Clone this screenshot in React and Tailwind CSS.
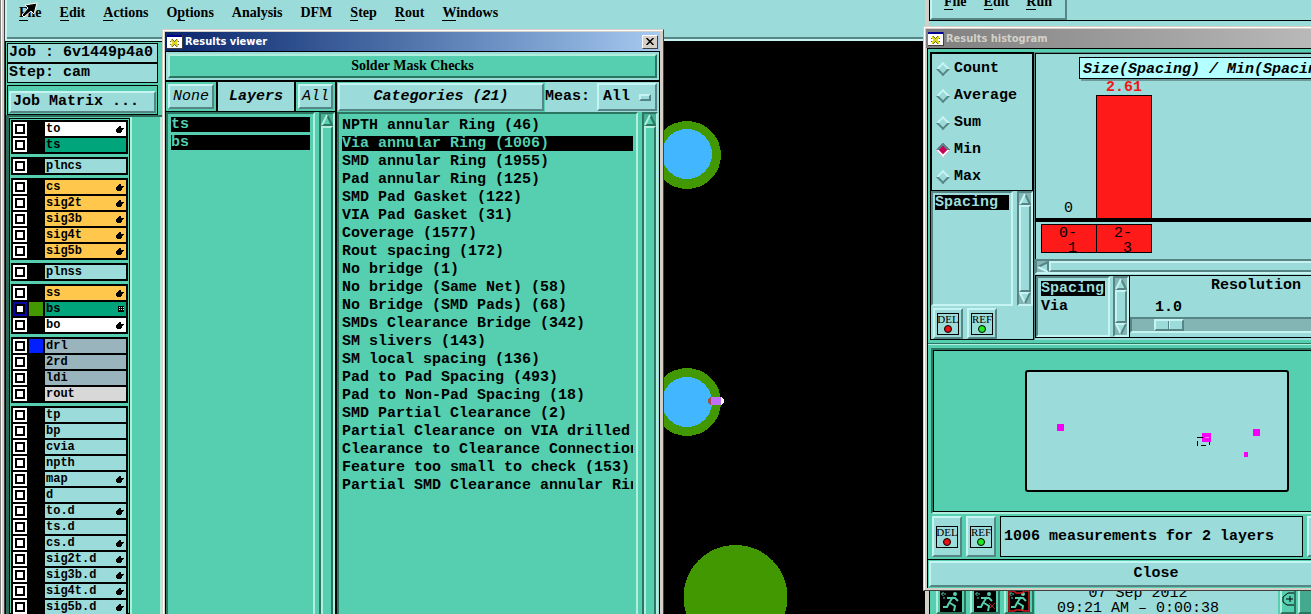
import React, { useState } from 'react';
import clsx from 'clsx';

const MONO = "font-['Liberation_Mono',monospace] text-[15px] leading-[18px]";
const SERIF = "font-['Liberation_Serif',serif] text-[14px] leading-[18px] font-bold";

// Motif bevels: light panels and green panels, raised and sunken
const RAISED = 'border-2 border-t-[#c6f4f2] border-l-[#c6f4f2] border-b-[#578585] border-r-[#578585]';
const SUNKEN = 'border-2 border-t-[#578585] border-l-[#578585] border-b-[#c6f4f2] border-r-[#c6f4f2]';
const RAISED_GREEN = 'border-2 border-t-[#b0eedd] border-l-[#b0eedd] border-b-[#2c7560] border-r-[#2c7560]';
const SUNKEN_GREEN = 'border-2 border-t-[#2c7560] border-l-[#2c7560] border-b-[#b0eedd] border-r-[#b0eedd]';

const layerGroups = [
  [
    { name: 'to', color: 'bg-white', hand: true },
    { name: 'ts', color: 'bg-[#00a57c]' },
  ],
  [{ name: 'plncs', color: 'bg-[#9bdbda]' }],
  [
    { name: 'cs', color: 'bg-[#ffc84c]', hand: true },
    { name: 'sig2t', color: 'bg-[#ffc84c]', hand: true },
    { name: 'sig3b', color: 'bg-[#ffc84c]', hand: true },
    { name: 'sig4t', color: 'bg-[#ffc84c]', hand: true },
    { name: 'sig5b', color: 'bg-[#ffc84c]', hand: true },
  ],
  [{ name: 'plnss', color: 'bg-[#9bdbda]' }],
  [
    { name: 'ss', color: 'bg-[#ffc84c]', hand: true },
    { name: 'bs', color: 'bg-[#00a57c]', swatch: 'bg-[#429800]', active: true, grid: true },
    { name: 'bo', color: 'bg-white', hand: true },
  ],
  [
    { name: 'drl', color: 'bg-[#9ab4bd]', swatch: 'bg-[#0020ff]' },
    { name: '2rd', color: 'bg-[#9ab4bd]' },
    { name: 'ldi', color: 'bg-[#9ab4bd]' },
    { name: 'rout', color: 'bg-[#d8d8d8]' },
  ],
  [
    { name: 'tp', color: 'bg-[#9bdbda]' },
    { name: 'bp', color: 'bg-[#9bdbda]' },
    { name: 'cvia', color: 'bg-[#9bdbda]' },
    { name: 'npth', color: 'bg-[#9bdbda]' },
    { name: 'map', color: 'bg-[#9bdbda]', hand: true },
    { name: 'd', color: 'bg-[#9bdbda]' },
    { name: 'to.d', color: 'bg-[#9bdbda]', hand: true },
    { name: 'ts.d', color: 'bg-[#9bdbda]' },
    { name: 'cs.d', color: 'bg-[#9bdbda]', hand: true },
    { name: 'sig2t.d', color: 'bg-[#9bdbda]', hand: true },
    { name: 'sig3b.d', color: 'bg-[#9bdbda]', hand: true },
    { name: 'sig4t.d', color: 'bg-[#9bdbda]', hand: true },
    { name: 'sig5b.d', color: 'bg-[#9bdbda]', hand: true },
  ],
];

const categories = [
  'NPTH annular Ring (46)',
  'Via annular Ring (1006)',
  'SMD annular Ring (1955)',
  'Pad annular Ring (125)',
  'SMD Pad Gasket (122)',
  'VIA Pad Gasket (31)',
  'Coverage (1577)',
  'Rout spacing (172)',
  'No bridge (1)',
  'No bridge (Same Net) (58)',
  'No Bridge (SMD Pads) (68)',
  'SMDs Clearance Bridge (342)',
  'SM slivers (143)',
  'SM local spacing (136)',
  'Pad to Pad Spacing (493)',
  'Pad to Non-Pad Spacing (18)',
  'SMD Partial Clearance (2)',
  'Partial Clearance on VIA drilled',
  'Clearance to Clearance Connection',
  'Feature too small to check (153)',
  'Partial SMD Clearance annular Ring',
];

const MenuItem = ({ label, index = 0, plain }) => (
  <button type="button" className={SERIF}>
    {plain ? label : (
      <>
        {label.slice(0, index)}
        <span className="border-b border-black">{label[index]}</span>
        {label.slice(index + 1)}
      </>
    )}
  </button>
);

const HandIcon = () => (
  <svg viewBox="0 0 8 8" className="w-2 h-2" shapeRendering="crispEdges">
    <path d="M3 1h2v2h3v1H7v1H6v2H5v1H1V7H0V4h1V3h1V2h1z" />
  </svg>
);

const GridIcon = () => (
  <svg viewBox="0 0 6 6" className="w-[6px] h-[6px]" shapeRendering="crispEdges">
    <path d="M0 0h6v6H0z" />
    <path d="M1 1h1v1H1zM3 1h1v1H3zM1 3h1v1H1zM3 3h1v1H3zM5 1h1v1H5zM5 3h1v1H5z" fill="#c8f0e4" />
  </svg>
);

const WindowIcon = () => (
  <svg viewBox="0 0 16 14" className="w-4 h-[14px]" shapeRendering="crispEdges">
    <path d="M0 0h16v14H0z" fill="#404040" />
    <path d="M0 0h15v13H0z" fill="#fff" />
    <path d="M0 0h15v2H0z" fill="#000090" />
    <path d="M4 5l7 6M11 5l-7 6" stroke="#6b6b20" strokeWidth="3" />
    <path d="M4 5l7 6M11 5l-7 6" stroke="#e0d820" strokeWidth="2" />
  </svg>
);

const Arrow = ({ dir = 'up', green }) => {
  const light = green ? '#b0eedd' : '#c6f4f2';
  const dark = green ? '#2c7560' : '#578585';
  const turn = { up: '', down: 'rotate-180', left: '-rotate-90' }[dir];
  return (
    <svg viewBox="0 0 12 12" className={clsx('w-3 h-3 shrink-0', turn)}>
      <path d="M6 1L11 11H1z" fill={green ? '#55cfaf' : '#9bdbda'} />
      <path d="M6 1L11 11H1" stroke={dir === 'down' ? light : dark} strokeWidth="2" fill="none" />
      <path d="M6 1L1 11" stroke={dir === 'down' ? dark : light} strokeWidth="2" />
    </svg>
  );
};

const ScrollBar = ({ green, bothEnds }) => (
  <div className={clsx('flex flex-col items-center w-4 shrink-0', green ? SUNKEN_GREEN : SUNKEN, green ? 'bg-[#45b094]' : 'bg-[#83b5b5]')}>
    <Arrow green={green} />
    <div className={clsx('flex-1 w-full', green ? RAISED_GREEN : RAISED, green ? 'bg-[#55cfaf]' : 'bg-[#9bdbda]')} />
    {bothEnds && <Arrow green={green} dir="down" />}
  </div>
);

const TitleBar = ({ title, active }) => (
  <div
    className={clsx(
      'flex items-center h-[19px] px-[2px] gap-[2px] bg-gradient-to-r',
      active ? 'from-[#0a246a] to-[#a6caf0] text-white' : 'from-[#808080] to-[#c4c4c4] text-[#d4d0c8]'
    )}
  >
    <WindowIcon />
    <span className="font-['DejaVu_Sans_Condensed','Noto_Sans',sans-serif] text-[11px] leading-[16px] font-bold">{title}</span>
    {active && (
      <button
        type="button"
        aria-label="Close window"
        className="ml-auto flex items-center justify-center w-4 h-[14px] bg-[#d4d0c8] border border-t-white border-l-white border-b-[#404040] border-r-[#404040]"
      >
        <svg viewBox="0 0 8 7" className="w-2 h-[7px]">
          <path d="M0.5 0l7 7M7.5 0l-7 7" stroke="#000" strokeWidth="1.5" />
        </svg>
      </button>
    )}
  </div>
);

const DotButton = ({ label, dot }) => (
  <button type="button" className={clsx('flex items-center justify-center w-[30px] bg-[#9bdbda]', RAISED)}>
    <span className="flex flex-col items-center w-[22px] h-[22px] border border-black">
      <span className="font-['Liberation_Serif',serif] text-[11px] leading-[11px]">{label}</span>
      <span className={clsx('w-2 h-2 rounded-full border border-black', dot)} />
    </span>
  </button>
);

const LayerRow = ({ layer }) => (
  <label className="flex gap-[2px] h-[14px]">
    <input
      type="checkbox"
      defaultChecked={layer.active}
      className="appearance-none w-[14px] h-[14px] border-2 border-white bg-white shadow-[inset_0_0_0_2px_#000] checked:border-[#0808a0]"
    />
    <span className={clsx('w-[14px]', layer.swatch || 'bg-black')} />
    <span className={clsx('flex flex-1 items-center justify-between pl-px pr-[2px]', layer.color)}>
      <span className="font-['Liberation_Mono',monospace] text-[12px] leading-[14px] font-bold">{layer.name}</span>
      {layer.hand && <HandIcon />}
      {layer.grid && <GridIcon />}
    </span>
  </label>
);

const Sidebar = () => (
  <aside className="flex flex-col w-[157px] shrink-0 bg-[#55cfaf] border-t border-l border-black">
    <div className={clsx('ml-px mr-1 mt-px border border-black bg-[#9bdbda] font-bold', MONO)}>
      <p className="px-px border-b-2 border-black whitespace-nowrap">Job : 6v1449p4a0</p>
      <p className="px-px">Step: cam</p>
    </div>
    <div className="ml-px mr-1 mt-[2px] p-px border border-black">
      <button type="button" className={clsx('w-full px-[2px] text-left font-bold bg-[#9bdbda]', MONO, RAISED)}>
        Job Matrix ...
      </button>
    </div>
    <div className="flex flex-1 min-h-0 border-t-2 border-l-[3px] border-[#2f6b5a]">
      <div className="flex flex-col gap-[3px] w-[121px] shrink-0 mt-px p-px border border-black">
        {layerGroups.map((group, i) => (
          <div key={i} className="flex flex-col gap-[2px] p-[2px] bg-black">
            {group.map((layer) => <LayerRow key={layer.name} layer={layer} />)}
          </div>
        ))}
      </div>
      <div className="flex-1 border-x-2 border-[#b0eedd]" />
    </div>
  </aside>
);

// Solder mask pads on the graphic area
const BoardCanvas = () => (
  <svg className="flex-1 h-full bg-black" shapeRendering="crispEdges">
    <g transform="translate(-162 -41)">
      <circle cx="687" cy="155" r="34" fill="#429800" />
      <circle cx="687" cy="154" r="25" fill="#42b6ff" />
      <circle cx="687" cy="402" r="34" fill="#429800" />
      <circle cx="687" cy="402" r="25" fill="#42b6ff" />
      <circle cx="712" cy="401" r="4" fill="#a05050" />
      <circle cx="720" cy="401" r="4" fill="#fff" />
      <path d="M711 397h10v8h-10z" fill="#c070f8" />
      <circle cx="735.5" cy="597" r="52" fill="#429800" />
    </g>
  </svg>
);

const ResultsViewer = () => {
  const [selected, setSelected] = useState('Via annular Ring (1006)');
  return (
    <section className="absolute left-[162px] top-[29px] -bottom-2 w-[502px] flex flex-col bg-[#d4d0c8] border border-t-[#d4d0c8] border-l-[#d4d0c8] border-r-[#404040] p-[2px] pr-[3px] shadow-[inset_1px_1px_0_#fff]">
      <TitleBar title="Results viewer" active />
      <div className="flex flex-col flex-1 min-h-0 border border-black bg-[#9bdbda]">
        <div className="p-[2px] border-b-2 border-black">
          <h1 className={clsx('py-px text-center bg-[#55cfaf]', SERIF, RAISED_GREEN)}>Solder Mask Checks</h1>
        </div>
        <div className="flex flex-1 min-h-0 pr-px">
          <div className="flex flex-col w-[171px] shrink-0 border-r-2 border-black bg-[#55cfaf]">
            <div className={clsx('flex h-[30px] border-b border-black', MONO)}>
              <div className="flex p-[2px] border-r-2 border-black">
                <button type="button" className={clsx('px-[3px] italic bg-[#9bdbda]', RAISED)}>None</button>
              </div>
              <h2 className="flex-1 flex items-center justify-center font-bold italic bg-[#9bdbda]">Layers</h2>
              <div className="flex p-[2px] border-l-2 border-black">
                <button type="button" className={clsx('px-[2px] italic bg-[#9bdbda]', RAISED)}>All</button>
              </div>
            </div>
            <div className="flex flex-1 min-h-0">
              <ul className={clsx('flex-1 flex flex-col gap-[3px] px-[3px] pt-[3px] mr-1 font-bold', MONO, SUNKEN_GREEN)}>
                <li className="h-[15px] leading-[15px] bg-black text-[#55cfaf]">ts</li>
                <li className="h-[15px] leading-[15px] bg-black text-[#55cfaf]">bs</li>
              </ul>
              <ScrollBar green />
            </div>
          </div>
          <div className="flex flex-col flex-1 min-w-0 bg-[#55cfaf]">
            <div className={clsx('flex h-[30px] font-bold bg-[#9bdbda]', MONO)}>
              <div className="flex w-[208px] p-px bg-[#55cfaf]">
                <button type="button" className={clsx('flex-1 font-bold italic bg-[#9bdbda]', RAISED)}>Categories (21)</button>
              </div>
              <label htmlFor="meas" className="self-center">Meas:</label>
              <div className="relative ml-auto my-px mr-px">
                <select id="meas" className={clsx('appearance-none w-[60px] h-full pl-1 font-bold bg-[#9bdbda]', RAISED)}>
                  <option>All</option>
                </select>
                <span className={clsx('absolute right-[6px] top-[11px] w-3 h-[7px] pointer-events-none', RAISED)} />
              </div>
            </div>
            <div className="flex flex-1 min-h-0">
              <ul className={clsx('flex-1 min-w-0 flex flex-col gap-[3px] px-[3px] pt-1 mr-1 font-bold', MONO, SUNKEN_GREEN)}>
                {categories.map((c) => (
                  <li
                    key={c}
                    onClick={() => setSelected(c)}
                    className={clsx(
                      'h-[15px] leading-[15px] shrink-0 overflow-hidden whitespace-nowrap',
                      c === selected && 'bg-black text-[#55cfaf]'
                    )}
                  >
                    {c}
                  </li>
                ))}
              </ul>
              <ScrollBar green />
            </div>
          </div>
        </div>
      </div>
    </section>
  );
};

const Chart = () => (
  <div className="flex flex-col h-[206px] border-t border-l border-black">
    <h2 className="self-center mt-[3px] px-[3px] h-[22px] leading-[24px] font-bold italic whitespace-nowrap border border-black bg-[#b4ffff] shadow-[2px_2px_0_#6f9a9a]">
      Size(Spacing) / Min(Spacing)
    </h2>
    <div className="flex flex-1 items-end pl-[5px] border-b-4 border-black">
      <div className="w-[55px] text-center">0</div>
      <div className="flex flex-col w-[56px]">
        <span className="text-center leading-[15px] font-bold text-[#f01818]">2.61</span>
        <div className="h-[123px] bg-[#ff1a1a] border border-b-0 border-black" />
      </div>
    </div>
    <div className="flex ml-[5px] mt-[2px] mb-[6px] w-[111px] h-[29px] bg-[#ff1a1a] border border-black leading-[15px]">
      <pre className={clsx('flex-1 pl-[17px] pt-px !leading-[15px]', MONO)}>{'0-\n 1'}</pre>
      <pre className={clsx('flex-1 pl-[17px] pt-px border-l border-black !leading-[15px]', MONO)}>{'2-\n 3'}</pre>
    </div>
  </div>
);

const HistogramWindow = () => (
  <section className={clsx('absolute left-[923px] top-[26px] w-[464px] flex flex-col p-[2px] bg-[#d4d0c8] border border-t-[#d4d0c8] border-l-[#d4d0c8] border-b-[#404040] border-r-[#404040] shadow-[inset_1px_1px_0_#fff]', MONO)}>
    <TitleBar title="Results histogram" />
    <div className="flex flex-col ml-px bg-[#55cfaf] border-l border-t border-black">
      <div className="flex mx-[2px] mt-[3px]">
        <div className="flex flex-col w-[104px] shrink-0 border border-black bg-[#9bdbda]">
          <fieldset className="flex flex-col gap-[9px] px-[6px] pt-[6px] pb-1 border border-black font-bold">
            {['Count', 'Average', 'Sum', 'Min', 'Max'].map((m) => (
              <label key={m} className="flex items-center gap-[6px] h-[18px]">
                <input
                  type="radio"
                  name="measure"
                  defaultChecked={m === 'Min'}
                  className="appearance-none rotate-45 w-[10px] h-[10px] shrink-0 border-2 border-t-[#c6f4f2] border-l-[#c6f4f2] border-b-[#578585] border-r-[#578585] checked:bg-[#c8005a] checked:border-t-[#578585] checked:border-l-[#578585] checked:border-b-white checked:border-r-white"
                />
                {m}
              </label>
            ))}
          </fieldset>
          <div className="flex h-[115px]">
            <ul className={clsx('flex-1 p-[2px] mr-1 font-bold', SUNKEN)}>
              <li className="h-[15px] leading-[15px] bg-black text-[#9bdbda]">Spacing</li>
            </ul>
            <ScrollBar bothEnds />
          </div>
          <div className="flex gap-1 pl-[2px] pt-[2px] h-[33px]">
            <DotButton label="DEL" dot="bg-[#e81010]" />
            <DotButton label="REF" dot="bg-[#20e820]" />
          </div>
        </div>
        <div className="flex flex-col flex-1 min-w-0 border-t border-l border-[#578585] bg-[#9bdbda]">
          <Chart />
          <div className={clsx('flex items-center h-[15px] bg-[#83b5b5]', SUNKEN)}>
            <Arrow dir="left" />
            <div className={clsx('flex-1 h-full bg-[#9bdbda]', RAISED)} />
          </div>
          <div className="flex h-[63px] mt-px border-y border-l border-black">
            <ul className={clsx('w-[74px] pl-[3px] pr-[3px] pt-[3px] mr-[3px] font-bold overflow-hidden', SUNKEN)}>
              <li className="h-[15px] mb-[3px] leading-[15px] bg-black text-[#9bdbda]">Spacing</li>
              <li className="h-[15px] leading-[15px]">Via</li>
            </ul>
            <ScrollBar bothEnds />
            <div className="flex flex-col flex-1 pt-px border-l border-black font-bold">
              <label htmlFor="resolution" className="text-center">Resolution</label>
              <span className="pl-[25px] pt-1">1.0</span>
              <input
                id="resolution"
                type="range"
                min="0"
                max="10"
                defaultValue="1"
                className={clsx(
                  'appearance-none w-full h-[16px] bg-[#83b5b5]',
                  SUNKEN,
                  '[&::-webkit-slider-thumb]:appearance-none [&::-webkit-slider-thumb]:w-[30px] [&::-webkit-slider-thumb]:h-[12px] [&::-webkit-slider-thumb]:border-2 [&::-webkit-slider-thumb]:border-t-[#c6f4f2] [&::-webkit-slider-thumb]:border-l-[#c6f4f2] [&::-webkit-slider-thumb]:border-b-[#578585] [&::-webkit-slider-thumb]:border-r-[#578585] [&::-webkit-slider-thumb]:bg-[linear-gradient(90deg,#9bdbda_12px,#578585_12px,#578585_13px,#c6f4f2_13px,#c6f4f2_14px,#9bdbda_14px)]'
                )}
              />
            </div>
          </div>
        </div>
      </div>
      <div className="mt-[3px] h-[2px] border-t border-b border-t-[#2c7560] border-b-[#b0eedd]" />
      <div className={clsx('mx-[3px] mt-[3px]', SUNKEN_GREEN)}>
        <div className="flex justify-center py-[19px] border border-r-0 border-black">
          <svg viewBox="0 0 264 122" className="w-[264px] h-[122px]">
            <rect x="1" y="1" width="262" height="120" rx="2" fill="#9bdbda" stroke="#000" strokeWidth="2" />
            <g fill="#f8f" shapeRendering="crispEdges">
              <path d="M32 54h7v7h-7zM177 63h9v9h-9zM228 59h7v7h-7zM219 82h4v5h-4z" fill="#f800f8" />
              <path d="M172 67h6M172 71v5M176 75h5M184 72v3" stroke="#000" fill="none" />
              <path d="M180 67h4v1h-4z" />
            </g>
          </svg>
        </div>
      </div>
      <div className="flex gap-1 h-[46px] pl-1 pr-1 py-[2px] border-b border-black">
        <DotButton label="DEL" dot="bg-[#e81010]" />
        <DotButton label="REF" dot="bg-[#20e820]" />
        <p className="flex items-center w-[303px] px-[3px] font-bold border border-black bg-[#9bdbda]">
          1006 measurements for 2 layers
        </p>
        <button type="button" aria-label="Layers" className={clsx('flex items-center w-[30px] pl-[2px] bg-[#9bdbda]', RAISED)}>
          <span className="w-[22px] h-[28px] border border-black bg-[linear-gradient(#2020f0_50%,#9bdbda_50%)]" />
        </button>
      </div>
      <button type="button" className={clsx('mx-px mt-px mb-px h-[26px] font-bold bg-[#9bdbda]', RAISED)}>Close</button>
    </div>
  </section>
);

const RunnerIcon = ({ mark, frame }) => (
  <svg viewBox="0 0 22 22" className="w-[22px] h-[22px] bg-black" fill="none" stroke="#55cfaf" strokeWidth="2">
    <circle cx="15" cy="4" r="2" fill="#55cfaf" stroke="none" />
    <path d="M13 7l-4 6M7 8h8l3 3M10 13l5 3-1 5M9 13l-2 4H3" />
    <path d="M1 4h5M3 2v4M3 8h3" strokeWidth="1" strokeDasharray="2 1" />
    {mark && <path d="M15 13l6 6M21 13l-6 6" stroke="#b02020" strokeWidth="1" />}
    {frame && <path d="M1 1h5l2 2h6l2-2h5v20h-5l-2-1H8l-2 1H1z" stroke="#d01818" strokeWidth="1.5" />}
  </svg>
);

const RunWindow = () => (
  <section className="absolute left-[925px] inset-y-0 w-[464px] flex flex-col bg-[#9bdbda] border-l-4 border-[#d4d0c8]">
    <div className="h-[21px] border-b border-l border-black">
      <nav className={clsx('flex items-start w-[137px] h-[20px] px-3 border-t-0', RAISED)}>
        <span className="-mt-[7px] flex gap-[17px]">
          <MenuItem label="File" />
          <MenuItem label="Edit" />
          <MenuItem label="Run" />
        </span>
      </nav>
    </div>
    <div className="flex-1" />
    <div className={clsx('flex h-[30px] pl-[2px] bg-[#55cfaf] border-l border-black', MONO)}>
      {[{}, { mark: true }, { frame: true }].map((icon, i) => (
        <button key={i} type="button" aria-label="Run check" className={clsx('flex items-end justify-center w-[30px] ml-1', RAISED_GREEN)}>
          <RunnerIcon {...icon} />
        </button>
      ))}
      <div className="w-[243px] ml-px pl-[22px] pt-[2px] bg-[#9bdbda]">
        <p className="w-[162px] text-center leading-[15px]">07 Sep 2012</p>
        <p className="w-[162px] text-center leading-[15px] whitespace-nowrap">09:21 AM – 0:00:38</p>
      </div>
      <button type="button" aria-label="Zoom in" className={clsx('flex items-center justify-center w-[16px] ml-[2px] bg-[#55cfaf]', RAISED_GREEN)}>
        <svg viewBox="0 0 12 14" className="w-3 h-[14px]" fill="none" stroke="#000">
          <path d="M12 1H6L1 5v5l4 3h7M4 7h7M8 4v6" />
        </svg>
      </button>
      <div className={clsx('flex-1 ml-[2px] bg-[#45a98e]', RAISED_GREEN)} />
    </div>
  </section>
);

const Pointer = () => (
  <svg viewBox="0 0 18 16" className="absolute left-[20px] top-[2px] w-[18px] h-4 pointer-events-none">
    <path d="M17 1L5 3l3 3-6 7 2 2 7-6 3 3z" fill="#000" stroke="#fff" strokeWidth="1" />
  </svg>
);

const App = () => (
  <div className="relative flex h-screen overflow-hidden bg-black text-black">
    <div className="w-[5px] shrink-0 bg-[#d4d0c8] border-x border-l-[#808080] border-r-[#404040] shadow-[inset_1px_0_0_#fff]" />
    <div className="flex flex-col flex-1 min-w-0">
      <nav className="flex items-start gap-[18px] h-[41px] shrink-0 pl-[12px] pt-1 bg-[#9bdbda] border-l-2 border-l-[#c6f4f2] border-b-2 border-b-[#c6f4f2] shadow-[inset_0_-2px_0_#578585]">
        <MenuItem label="File" />
        <MenuItem label="Edit" />
        <MenuItem label="Actions" />
        <MenuItem label="Options" index={1} />
        <MenuItem label="Analysis" plain />
        <MenuItem label="DFM" plain />
        <MenuItem label="Step" />
        <MenuItem label="Rout" />
        <MenuItem label="Windows" />
      </nav>
      <div className="flex flex-1 min-h-0">
        <Sidebar />
        <BoardCanvas />
      </div>
    </div>
    <Pointer />
    <ResultsViewer />
    <RunWindow />
    <HistogramWindow />
  </div>
);

export default App;
